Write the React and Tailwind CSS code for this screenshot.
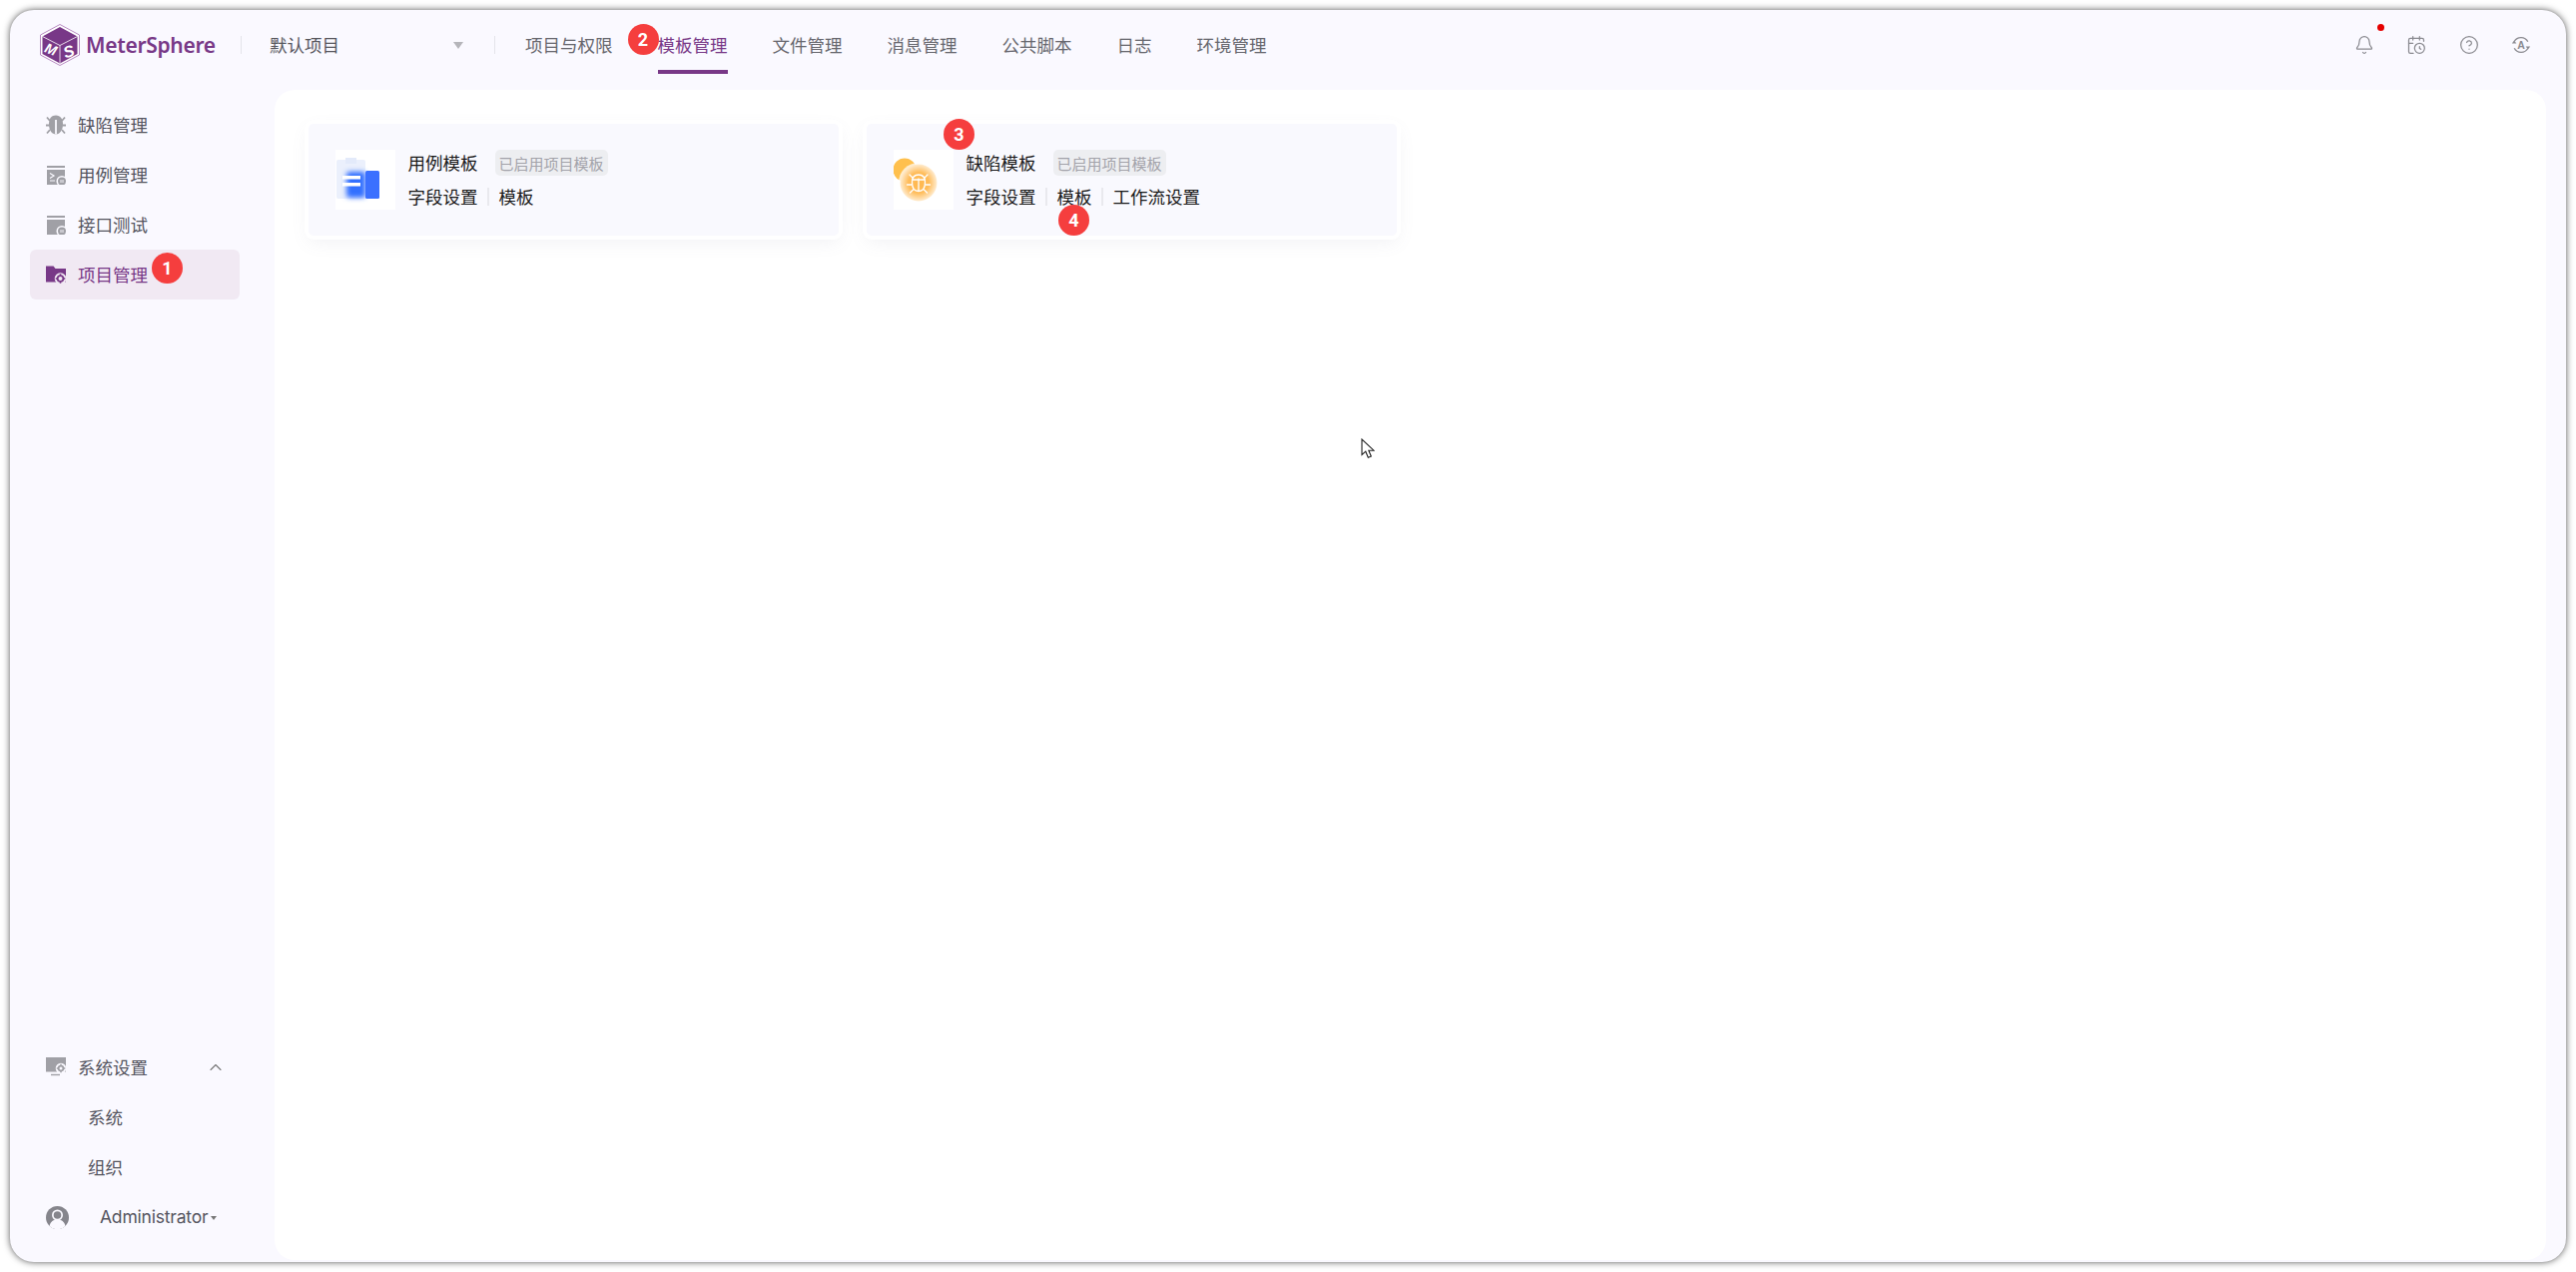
import React from "react";
import { Bell, CalendarClock, CircleHelp, ChevronUp } from "lucide-react";

const Gear = ({ cx, cy, r, fill = "#fff", bg }) => (
  <g>
    <circle cx={cx} cy={cy} r={r + 2} fill={bg} />
    <circle cx={cx} cy={cy} r={r - 0.9} fill="none" stroke={fill} strokeWidth="1.8" />
    <g stroke={fill} strokeWidth="1.5">
      <path d={`M${cx} ${cy - r - 1}V${cy - r + 1}M${cx} ${cy + r - 1}V${cy + r + 1}M${cx - r - 1} ${cy}H${cx - r + 1}M${cx + r - 1} ${cy}H${cx + r + 1}`} />
    </g>
  </g>
);

const BugNav = () => (
  <svg width="20" height="20" viewBox="0 0 20 20" fill="none">
    <g stroke="#a0a0a6" strokeWidth="1.8">
      <path d="M4 6 1 2.500M16 6l3-3.500M3.500 10.500H0M16.500 10.500H20M4 15l-3 3.500M16 15l3 3.500" />
    </g>
    <path d="M10 .5C5.500.5 3 3.500 3 9.500s3 10 7 10 7-4.500 7-10S14.500.5 10 .5Z" fill="#a0a0a6" />
    <path d="M10 5v14.500" stroke="#faf9ff" strokeWidth="1.800" />
  </svg>
);
const TermIcon = ({ prompt }) => (
  <svg width="20" height="20" viewBox="0 0 20 20" fill="none">
    <rect x="1" y="1" width="18" height="2" fill="#a0a0a6" />
    <rect x="1" y="5" width="18" height="15" fill="#a0a0a6" />
    {prompt && <path d="M4 8.500 8 11l-4 2.500M4 16h5" stroke="#faf9ff" strokeWidth="1.200" />}
    <circle cx="16" cy="16.500" r="5.500" fill="#faf9ff" />
    <circle cx="16" cy="16.500" r="4" fill="#a0a0a6" />
    <path d="M15 15v3M17 15v3" stroke="#faf9ff" strokeWidth="0.900" />
  </svg>
);
const FolderIcon = () => (
  <svg width="20" height="20" viewBox="0 0 20 20" fill="none">
    <path d="M0 1.500h7.500l2 2.500H20v13.500H0Z" fill="#783887" />
    <Gear cx={14.500} cy={14} r={3.800} fill="#783887" bg="#f1e9f3" />
  </svg>
);
const MonitorIcon = () => (
  <svg width="20" height="20" viewBox="0 0 20 20" fill="none">
    <rect x="0" y="0" width="20" height="14.500" fill="#a0a0a6" />
    <path d="M5 17.500h9" stroke="#a0a0a6" strokeWidth="1.400" />
    <Gear cx={15} cy={11} r={3.300} fill="#a0a0a6" bg="#faf9ff" />
  </svg>
);

const Logo = () => (
  <svg width="40" height="42" viewBox="0 0 40 42" fill="none">
    <path d="M20 .5 39.500 11v20L20 41.500.5 31V11Z" stroke="#b88cc2" strokeWidth="1" fill="#fff" />
    <path d="M20 3 37.500 12.500v17.500L20 39.500 2.500 30V12.500Z" fill="#783887" />
    <path d="M20 21.500V39M2.500 12.500 20 21.500 37.500 12.500" stroke="#fff" strokeWidth="0.800" />
    <text x="4.500" y="30" fontSize="14" fontWeight="800" fontStyle="italic" fill="#fff" fontFamily="'Liberation Sans',sans-serif" transform="rotate(22 10 27)">M</text>
    <text x="23.500" y="33.500" fontSize="16" fontWeight="800" fontStyle="italic" fill="#fff" fontFamily="'Liberation Sans',sans-serif" transform="rotate(-18 28 28)">S</text>
  </svg>
);

const CaseArt = () => (
  <svg width="60" height="60" viewBox="0 0 60 60" fill="none">
    <defs>
      <filter id="blurA" x="-40%" y="-40%" width="180%" height="180%"><feGaussianBlur stdDeviation="2.500" /></filter>
    </defs>
    <rect x="1" y="10" width="29" height="39" rx="2" fill="#ebf0fc" />
    <rect x="10" y="8" width="11" height="6" fill="#e3eafa" />
    <rect x="11" y="22" width="19" height="26" rx="3" fill="#3370ff" filter="url(#blurA)" />
    <rect x="30" y="21" width="14" height="28" rx="1.500" fill="#3b70ff" />
    <rect x="7" y="26" width="18" height="3.500" fill="#fff" />
    <rect x="7" y="33" width="18" height="3.500" fill="#fff" />
  </svg>
);
const BugArt = () => (
  <svg width="60" height="60" viewBox="0 0 60 60" fill="none">
    <defs>
      <radialGradient id="glowB">
        <stop offset="0" stopColor="#ffb84f" />
        <stop offset="0.550" stopColor="#ffbc5a" />
        <stop offset="1" stopColor="#ffecd0" />
      </radialGradient>
    </defs>
    <circle cx="11" cy="20" r="11.500" fill="#ffc04d" />
    <circle cx="25" cy="33" r="20" fill="#fff" opacity="0.700" />
    <circle cx="25" cy="33" r="18.500" fill="url(#glowB)" />
    <g stroke="#fff" strokeWidth="1.300" strokeLinecap="round">
      <path d="M25 25c-4.500 0-6.500 3-6.500 7.500 0 5.500 2.500 9 6.500 9s6.500-3.500 6.500-9C31.500 28 29.500 25 25 25ZM25 29v12.500M18.500 30h13" />
      <path d="M19 28l-3-3M31 28l3-3M18 35h-4.500M32 35h4.500M19.500 40l-3 3M30.500 40l3 3" />
    </g>
  </svg>
);

const Badge = ({ n, className }) => (
  <span className={`absolute flex h-[31px] w-[31px] items-center justify-center rounded-full bg-[#f53e3e] font-['Roboto',sans-serif] text-[18px] font-bold text-white ${className}`}>
    {n}
  </span>
);

const LangIcon = () => (
  <svg width="20" height="20" viewBox="0 0 20 20" fill="none" stroke="#8a8a90" strokeWidth="1.300">
    <path d="M3.200 6.500A7.800 7.800 0 0 1 16.800 6.800M16.800 13.500A7.800 7.800 0 0 1 3.200 13.200" />
    <path d="M.8 8.500h4.500l-2.200-3ZM19.200 11.500h-4.500l2.200 3Z" fill="#8a8a90" stroke="none" />
    <text x="10" y="14" textAnchor="middle" fontSize="10.500" fontWeight="700" fill="#8a8a90" stroke="none" fontFamily="'Liberation Sans',sans-serif">A</text>
  </svg>
);

const Cursor = () => (
  <svg className="absolute left-[1088px] top-[349px]" width="14" height="21" viewBox="0 0 14 21" fill="none">
    <path d="M1 1v15.500l3.800-3.300 2.500 6 3-1.200-2.500-5.800H13Z" fill="#fff" stroke="#222" strokeWidth="1.100" />
  </svg>
);

const NavItem = ({ icon, label, active, children }) => (
  <div className={`relative flex h-[50px] items-center gap-3 rounded-md px-4 ${active ? "bg-[#f1e9f3] text-[#783887]" : "text-[#555560]"}`}>
    <span className="flex w-5 shrink-0 items-center justify-center">{icon}</span>
    <span>{label}</span>
    {children}
  </div>
);

const Sep = () => <span className="mx-[9.500px] inline-block h-[18px] w-[2px] bg-[#e9e9ee]" />;

const Card = ({ art, title, links, badges }) => (
  <div className="relative flex h-[112px] w-[531px] gap-[13px] rounded-[5px] bg-[#f9f9fe] pl-[26.500px] pt-[26px] shadow-[0_0_0_4px_#fff,0_6px_18px_rgba(120,120,150,0.10)]">
    <div className="h-[60px] w-[60px] shrink-0 bg-white">{art}</div>
    <div className="flex flex-col">
      <div className="flex h-[26px] items-center gap-[17px]">
        <span className="-mt-[1px] text-[#1a1a1a]">{title}</span>
        <span className="flex h-[26px] items-center rounded-[5px] bg-[#edeef1] px-[4px] text-[15px] text-[#a3a3aa]">已启用项目模板</span>
      </div>
      <div className="mt-[10px] flex h-[22px] items-center text-[#1a1a1a]">
        {links.map((l, i) => (
          <React.Fragment key={l}>
            {i > 0 && <Sep />}
            <span>{l}</span>
          </React.Fragment>
        ))}
      </div>
    </div>
    {badges}
  </div>
);

export default function App() {
  const nav = ["文件管理", "消息管理", "公共脚本", "日志", "环境管理"];
  return (
    <div className="h-[1274px] w-[2580px] overflow-hidden bg-white p-[10px] font-['Noto_Sans_CJK_SC',sans-serif] text-[17.500px] leading-none">
      <div className="flex h-full flex-col rounded-[24px] bg-[#faf9ff] shadow-[0_0_7px_rgba(0,0,0,0.65)]">
        <header className="flex h-[80px] shrink-0 items-center pb-[10px] pl-[30px] pr-[35px]">
          <div className="flex items-center gap-[6px]">
            <Logo />
            <span className="w-[130px] font-['Noto_Sans',sans-serif] text-[21px] font-semibold tracking-[-0.300px] text-[#783887]">MeterSphere</span>
          </div>
          <span className="ml-[25px] h-[18px] w-px bg-[#e4e4ea]" />
          <div className="ml-[28px] flex w-[194px] items-center justify-between text-[#55555c]">
            <span>默认项目</span>
            <span className="h-0 w-0 border-x-[5.500px] border-t-[7px] border-x-transparent border-t-[#b5b5ba]" />
          </div>
          <span className="ml-[31px] h-[18px] w-px bg-[#e4e4ea]" />
          <nav className="ml-[30px] flex items-center gap-[45px] text-[#66666d]">
            <span className="flex h-[58px] items-center border-y-4 border-transparent">项目与权限</span>
            <span className="relative flex h-[58px] items-center border-y-4 border-transparent border-b-[#783887] text-[#783887]">
              模板管理
              <Badge n="2" className="left-[-30px] top-[4px]" />
            </span>
            {nav.map((n) => (
              <span key={n} className="flex h-[58px] items-center border-y-4 border-transparent">{n}</span>
            ))}
          </nav>
          <div className="ml-auto flex items-center gap-[32.500px]">
            <span className="relative">
              <Bell size={20} strokeWidth={1.500} color="#8a8a90" />
              <span className="absolute right-[-10px] top-[-11px] h-[7px] w-[7px] rounded-full bg-[#e60000]" />
            </span>
            <CalendarClock size={20} strokeWidth={1.500} color="#8a8a90" />
            <CircleHelp size={20} strokeWidth={1.500} color="#8a8a90" />
            <LangIcon />
          </div>
        </header>
        <div className="flex min-h-0 flex-1 pb-[2px] pr-[20px]">
          <aside className="flex w-[265px] shrink-0 flex-col justify-between pb-[18px] pl-[20px] pr-[35px] pt-[10px]">
            <div className="flex flex-col">
              <NavItem icon={<BugNav />} label="缺陷管理" />
              <NavItem icon={<TermIcon prompt />} label="用例管理" />
              <NavItem icon={<TermIcon />} label="接口测试" />
              <NavItem icon={<FolderIcon />} label="项目管理" active>
                <Badge n="1" className="left-[122px] top-[3px]" />
              </NavItem>
            </div>
            <div className="flex flex-col text-[#555560]">
              <div className="flex h-[50px] items-center gap-3 px-4">
                <span className="flex w-5 shrink-0"><MonitorIcon /></span>
                <span>系统设置</span>
                <ChevronUp className="ml-auto mr-[-2px]" size={20} strokeWidth={1.300} color="#777" />
              </div>
              <div className="flex h-[50px] items-center pl-[58px]">系统</div>
              <div className="flex h-[50px] items-center pl-[58px]">组织</div>
              <div className="flex h-[50px] items-center pl-[16px]">
                <svg width="23" height="23" viewBox="0 0 23 23">
                  <circle cx="11.500" cy="11.500" r="11.500" fill="#85858c" />
                  <circle cx="11.500" cy="9" r="5.500" fill="#faf9ff" />
                  <path d="M3.500 20c1-4.500 4-6.500 8-6.500s7 2 8 6.500a11.500 11.500 0 0 1-16 0Z" fill="#faf9ff" />
                  <circle cx="11.500" cy="9" r="3.800" fill="#85858c" />
                </svg>
                <span className="ml-[31px] font-['Inter',sans-serif] text-[17.500px] tracking-[-0.200px]">Administrator</span>
                <span className="ml-[3px] mt-[2px] h-0 w-0 border-x-[3px] border-t-[4px] border-x-transparent border-t-[#777]" />
              </div>
            </div>
          </aside>
          <main className="relative min-w-0 flex-1 rounded-[20px] bg-white pl-[34px] pt-[34px]">
            <div className="flex gap-[28px]">
              <Card art={<CaseArt />} title="用例模板" links={["字段设置", "模板"]} />
              <Card
                art={<BugArt />}
                title="缺陷模板"
                links={["字段设置", "模板", "工作流设置"]}
                badges={
                  <>
                    <Badge n="3" className="left-[77px] top-[-5px]" />
                    <Badge n="4" className="left-[192px] top-[81px]" />
                  </>
                }
              />
            </div>
            <Cursor />
          </main>
        </div>
      </div>
    </div>
  );
}
